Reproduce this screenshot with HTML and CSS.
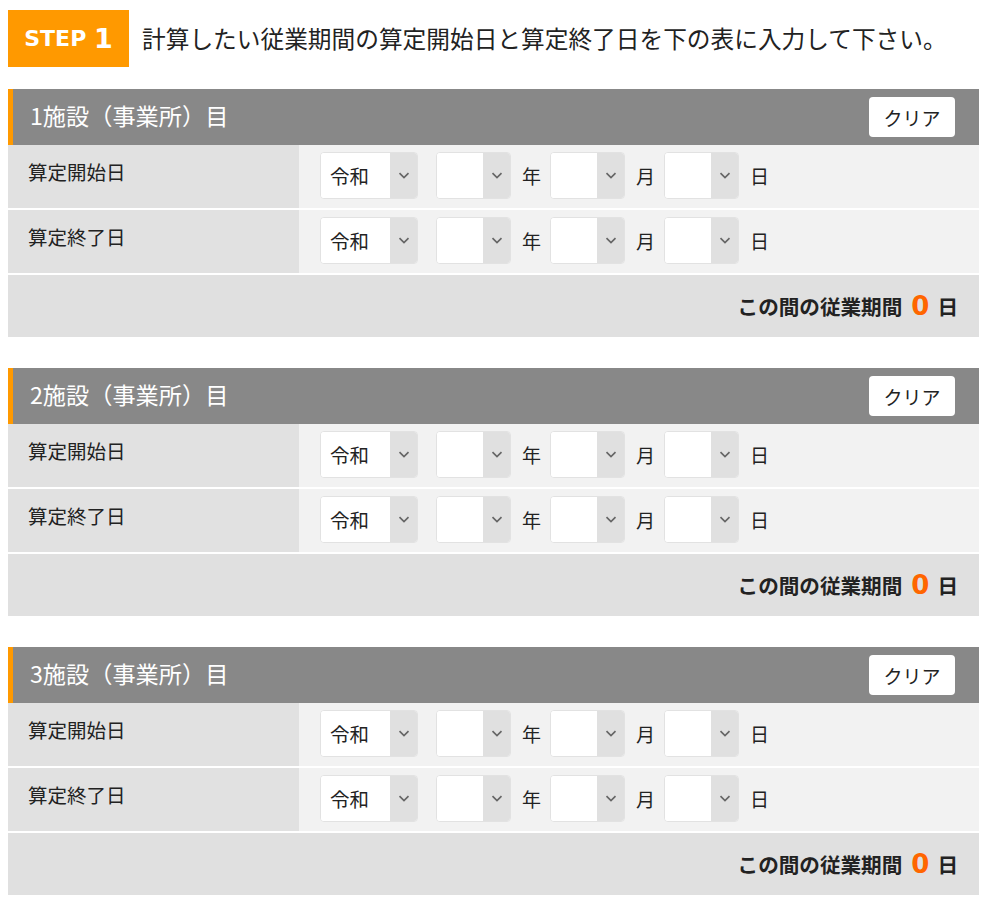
FILE: index.html
```html
<!DOCTYPE html>
<html lang="ja">
<head>
	<meta charset="UTF-8">
	<title>従業期間の計算</title>
	<link rel="stylesheet" href="styles.css">
</head>
<body>
	<div class="wrap">
		<div class="step">
			<span class="step-no">STEP <b>1</b></span>
			<p>計算したい従業期間の算定開始日と算定終了日を下の表に入力して下さい。</p>
		</div>

		<!-- 1施設目 -->
		<div class="facility">
			<div class="fac-head">
				<h2>1施設（事業所）目</h2>
				<button class="clear" type="button">クリア</button>
			</div>
			<div class="row">
				<div class="label">算定開始日</div>
				<div class="dates">
					<div class="sel era"><select><option>令和</option><option>平成</option><option>昭和</option></select><span class="arrow"><svg width="12" height="7" viewBox="0 0 12 7"><path d="M1.5 1.2l4.5 4.3 4.5-4.3" fill="none" stroke="#666" stroke-width="1.7"/></svg></span></div>
					<div class="sel"><select><option></option></select><span class="arrow"><svg width="12" height="7" viewBox="0 0 12 7"><path d="M1.5 1.2l4.5 4.3 4.5-4.3" fill="none" stroke="#666" stroke-width="1.7"/></svg></span></div>
					<span class="unit">年</span>
					<div class="sel"><select><option></option></select><span class="arrow"><svg width="12" height="7" viewBox="0 0 12 7"><path d="M1.5 1.2l4.5 4.3 4.5-4.3" fill="none" stroke="#666" stroke-width="1.7"/></svg></span></div>
					<span class="unit">月</span>
					<div class="sel"><select><option></option></select><span class="arrow"><svg width="12" height="7" viewBox="0 0 12 7"><path d="M1.5 1.2l4.5 4.3 4.5-4.3" fill="none" stroke="#666" stroke-width="1.7"/></svg></span></div>
					<span class="unit">日</span>
				</div>
			</div>
			<div class="row">
				<div class="label">算定終了日</div>
				<div class="dates">
					<div class="sel era"><select><option>令和</option><option>平成</option><option>昭和</option></select><span class="arrow"><svg width="12" height="7" viewBox="0 0 12 7"><path d="M1.5 1.2l4.5 4.3 4.5-4.3" fill="none" stroke="#666" stroke-width="1.7"/></svg></span></div>
					<div class="sel"><select><option></option></select><span class="arrow"><svg width="12" height="7" viewBox="0 0 12 7"><path d="M1.5 1.2l4.5 4.3 4.5-4.3" fill="none" stroke="#666" stroke-width="1.7"/></svg></span></div>
					<span class="unit">年</span>
					<div class="sel"><select><option></option></select><span class="arrow"><svg width="12" height="7" viewBox="0 0 12 7"><path d="M1.5 1.2l4.5 4.3 4.5-4.3" fill="none" stroke="#666" stroke-width="1.7"/></svg></span></div>
					<span class="unit">月</span>
					<div class="sel"><select><option></option></select><span class="arrow"><svg width="12" height="7" viewBox="0 0 12 7"><path d="M1.5 1.2l4.5 4.3 4.5-4.3" fill="none" stroke="#666" stroke-width="1.7"/></svg></span></div>
					<span class="unit">日</span>
				</div>
			</div>
			<div class="total">この間の従業期間<span class="days">0</span>日</div>
		</div>

		<!-- 2施設目 -->
		<div class="facility">
			<div class="fac-head">
				<h2>2施設（事業所）目</h2>
				<button class="clear" type="button">クリア</button>
			</div>
			<div class="row">
				<div class="label">算定開始日</div>
				<div class="dates">
					<div class="sel era"><select><option>令和</option><option>平成</option><option>昭和</option></select><span class="arrow"><svg width="12" height="7" viewBox="0 0 12 7"><path d="M1.5 1.2l4.5 4.3 4.5-4.3" fill="none" stroke="#666" stroke-width="1.7"/></svg></span></div>
					<div class="sel"><select><option></option></select><span class="arrow"><svg width="12" height="7" viewBox="0 0 12 7"><path d="M1.5 1.2l4.5 4.3 4.5-4.3" fill="none" stroke="#666" stroke-width="1.7"/></svg></span></div>
					<span class="unit">年</span>
					<div class="sel"><select><option></option></select><span class="arrow"><svg width="12" height="7" viewBox="0 0 12 7"><path d="M1.5 1.2l4.5 4.3 4.5-4.3" fill="none" stroke="#666" stroke-width="1.7"/></svg></span></div>
					<span class="unit">月</span>
					<div class="sel"><select><option></option></select><span class="arrow"><svg width="12" height="7" viewBox="0 0 12 7"><path d="M1.5 1.2l4.5 4.3 4.5-4.3" fill="none" stroke="#666" stroke-width="1.7"/></svg></span></div>
					<span class="unit">日</span>
				</div>
			</div>
			<div class="row">
				<div class="label">算定終了日</div>
				<div class="dates">
					<div class="sel era"><select><option>令和</option><option>平成</option><option>昭和</option></select><span class="arrow"><svg width="12" height="7" viewBox="0 0 12 7"><path d="M1.5 1.2l4.5 4.3 4.5-4.3" fill="none" stroke="#666" stroke-width="1.7"/></svg></span></div>
					<div class="sel"><select><option></option></select><span class="arrow"><svg width="12" height="7" viewBox="0 0 12 7"><path d="M1.5 1.2l4.5 4.3 4.5-4.3" fill="none" stroke="#666" stroke-width="1.7"/></svg></span></div>
					<span class="unit">年</span>
					<div class="sel"><select><option></option></select><span class="arrow"><svg width="12" height="7" viewBox="0 0 12 7"><path d="M1.5 1.2l4.5 4.3 4.5-4.3" fill="none" stroke="#666" stroke-width="1.7"/></svg></span></div>
					<span class="unit">月</span>
					<div class="sel"><select><option></option></select><span class="arrow"><svg width="12" height="7" viewBox="0 0 12 7"><path d="M1.5 1.2l4.5 4.3 4.5-4.3" fill="none" stroke="#666" stroke-width="1.7"/></svg></span></div>
					<span class="unit">日</span>
				</div>
			</div>
			<div class="total">この間の従業期間<span class="days">0</span>日</div>
		</div>

		<!-- 3施設目 -->
		<div class="facility">
			<div class="fac-head">
				<h2>3施設（事業所）目</h2>
				<button class="clear" type="button">クリア</button>
			</div>
			<div class="row">
				<div class="label">算定開始日</div>
				<div class="dates">
					<div class="sel era"><select><option>令和</option><option>平成</option><option>昭和</option></select><span class="arrow"><svg width="12" height="7" viewBox="0 0 12 7"><path d="M1.5 1.2l4.5 4.3 4.5-4.3" fill="none" stroke="#666" stroke-width="1.7"/></svg></span></div>
					<div class="sel"><select><option></option></select><span class="arrow"><svg width="12" height="7" viewBox="0 0 12 7"><path d="M1.5 1.2l4.5 4.3 4.5-4.3" fill="none" stroke="#666" stroke-width="1.7"/></svg></span></div>
					<span class="unit">年</span>
					<div class="sel"><select><option></option></select><span class="arrow"><svg width="12" height="7" viewBox="0 0 12 7"><path d="M1.5 1.2l4.5 4.3 4.5-4.3" fill="none" stroke="#666" stroke-width="1.7"/></svg></span></div>
					<span class="unit">月</span>
					<div class="sel"><select><option></option></select><span class="arrow"><svg width="12" height="7" viewBox="0 0 12 7"><path d="M1.5 1.2l4.5 4.3 4.5-4.3" fill="none" stroke="#666" stroke-width="1.7"/></svg></span></div>
					<span class="unit">日</span>
				</div>
			</div>
			<div class="row">
				<div class="label">算定終了日</div>
				<div class="dates">
					<div class="sel era"><select><option>令和</option><option>平成</option><option>昭和</option></select><span class="arrow"><svg width="12" height="7" viewBox="0 0 12 7"><path d="M1.5 1.2l4.5 4.3 4.5-4.3" fill="none" stroke="#666" stroke-width="1.7"/></svg></span></div>
					<div class="sel"><select><option></option></select><span class="arrow"><svg width="12" height="7" viewBox="0 0 12 7"><path d="M1.5 1.2l4.5 4.3 4.5-4.3" fill="none" stroke="#666" stroke-width="1.7"/></svg></span></div>
					<span class="unit">年</span>
					<div class="sel"><select><option></option></select><span class="arrow"><svg width="12" height="7" viewBox="0 0 12 7"><path d="M1.5 1.2l4.5 4.3 4.5-4.3" fill="none" stroke="#666" stroke-width="1.7"/></svg></span></div>
					<span class="unit">月</span>
					<div class="sel"><select><option></option></select><span class="arrow"><svg width="12" height="7" viewBox="0 0 12 7"><path d="M1.5 1.2l4.5 4.3 4.5-4.3" fill="none" stroke="#666" stroke-width="1.7"/></svg></span></div>
					<span class="unit">日</span>
				</div>
			</div>
			<div class="total">この間の従業期間<span class="days">0</span>日</div>
		</div>
	</div>
</body>
</html>
```

FILE: styles.css
```css
*{
	padding:0;
	margin:0;
	box-sizing:border-box;
}
body{
	font-family:"Noto Sans CJK JP", sans-serif;
	color:#222;
	background:#fff;
}
.wrap{
	width:971px;
	margin:10px 0 0 8px;
}
/* STEP見出し */
.step{
	display:flex;
	align-items:center;
	height:57px;
}
.step-no{
	width:121px;
	height:57px;
	display:flex;
	align-items:center;
	justify-content:center;
	background:#ff9900;
	color:#fff;
	font-family:"DejaVu Sans", sans-serif;
	font-weight:bold;
	font-size:22px;
	white-space:pre;
}
.step-no b{
	font-size:27px;
}
.step p{
	margin-left:13px;
	font-size:23.7px;
	line-height:1;
	color:#222;
}
/* 施設ブロック */
.facility{
	margin-top:22px;
}
.facility + .facility{
	margin-top:31px;
}
.fac-head{
	height:56px;
	display:flex;
	align-items:center;
	justify-content:space-between;
	background:#888;
	border-left:5px solid #ff9900;
	padding:0 24px 0 17px;
}
.fac-head h2{
	font-size:23.2px;
	font-weight:normal;
	color:#fff;
	line-height:1;
	margin-top:-3px;
}
.clear{
	width:86px;
	height:40px;
	border:none;
	border-radius:4px;
	background:#fff;
	color:#222;
	font-family:"Noto Sans CJK JP", sans-serif;
	font-size:19px;
	cursor:pointer;
}
.row{
	display:flex;
	height:63px;
	margin-bottom:2px;
}
.label{
	width:291px;
	background:#e1e1e1;
	padding:13px 20px 0;
	font-size:19.5px;
	line-height:28px;
}
.dates{
	flex:1;
	display:flex;
	align-items:flex-start;
	background:#f2f2f2;
	padding:7px 0 0 21px;
}
.sel{
	display:flex;
	width:75px;
	height:47px;
	border:1px solid #e2e2e2;
	border-radius:4px;
	overflow:hidden;
	background:#fff;
}
.sel.era{
	width:98px;
	margin-right:18px;
}
.sel select{
	flex:1;
	min-width:0;
	border:none;
	outline:none;
	background:#fff;
	-webkit-appearance:none;
	appearance:none;
	padding-left:9px;
	font-family:"Noto Sans CJK JP", sans-serif;
	font-size:19.5px;
	color:#222;
}
.arrow{
	width:27px;
	display:flex;
	align-items:center;
	justify-content:center;
	background:#e0e0e0;
}
.unit{
	height:47px;
	line-height:47px;
	font-size:19px;
	margin:0 9px 0 11px;
}
.total{
	height:62px;
	display:flex;
	align-items:center;
	justify-content:flex-end;
	background:#e0e0e0;
	padding-right:21px;
	font-size:20.6px;
	font-weight:bold;
}
.days{
	font-family:"DejaVu Sans", sans-serif;
	font-size:26px;
	color:#ff6600;
	margin:0 8px 0 9px;
}
```
